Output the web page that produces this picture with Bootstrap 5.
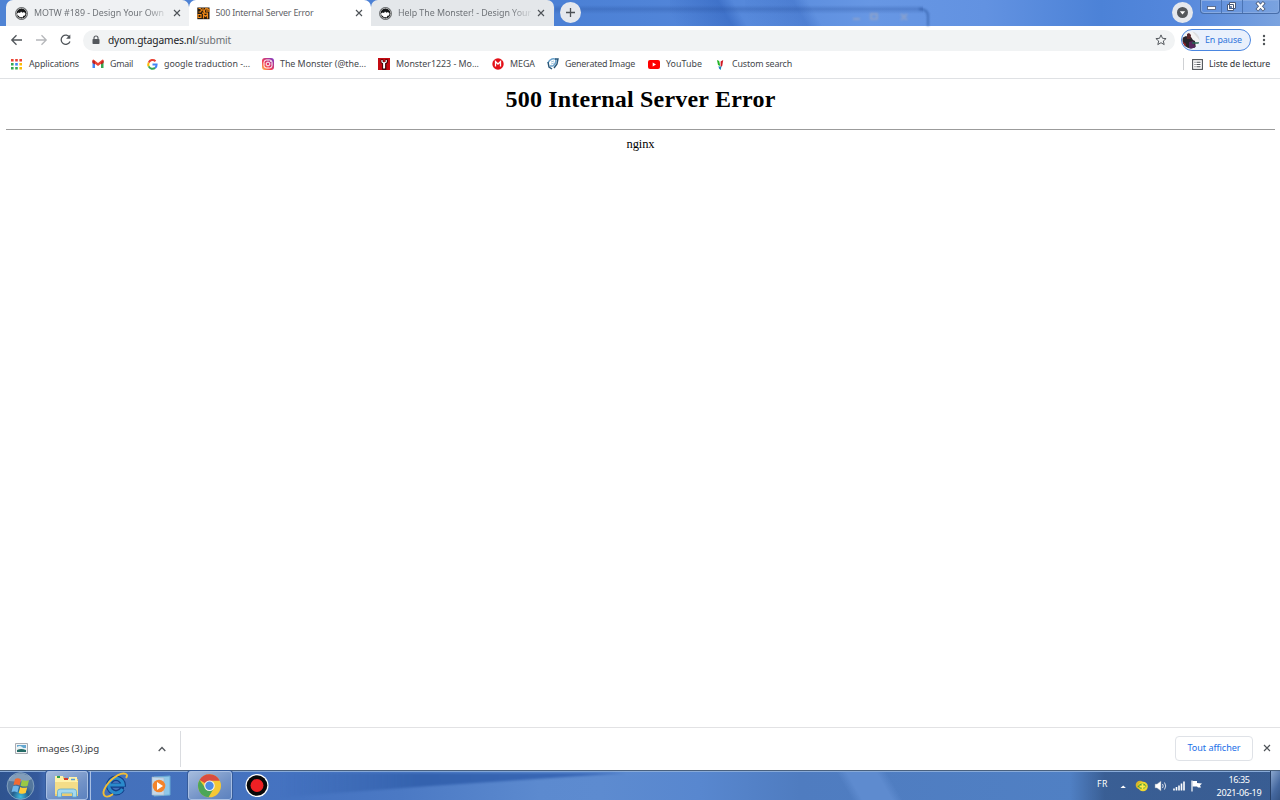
<!DOCTYPE html>
<html lang="fr">
<head>
<meta charset="utf-8">
<meta name="viewport" content="width=device-width, initial-scale=1">
<title>500 Internal Server Error</title>
<link href="https://cdn.jsdelivr.net/npm/bootstrap@5.3.0/dist/css/bootstrap.min.css" rel="stylesheet">
<style>
body{width:1280px;height:800px;overflow:hidden;font-family:"Noto Sans","Open Sans",sans-serif;font-size:8.9px;line-height:12px;color:#3c4043;background:#fff}
svg{display:block;flex:none;overflow:visible}
.lbl{white-space:nowrap;display:block}
.strip{height:26px;background:
 linear-gradient(180deg,transparent 5px,rgba(35,75,150,.28) 9px,transparent 14px) 555px 0/368px 26px no-repeat,
 linear-gradient(60deg,transparent 5%,rgba(25,75,170,.34) 50%,transparent 62%) 670px 0/110px 26px no-repeat,
 linear-gradient(60deg,transparent 5%,rgba(25,75,170,.24) 50%,transparent 62%) 745px 0/110px 26px no-repeat,
 linear-gradient(90deg,#4f83d4,#4b80d5 44%,#5487da 57%,#6797e4 68%,#6292e1 77%,#4c82d7 86%,#5487dc 92%,#7ba3df)}
.tab{width:182.5px;height:26px;border-radius:7px 7px 0 0;background:#eff1f3;color:#6f7378;padding-left:9px;position:relative}
.tab.active{background:#fff;color:#5f6368;padding-left:8px}
.tab.third{background:#e4e7ea;padding-left:8px}
.tab .lbl{width:133px;margin-left:6px;overflow:hidden}
.fade-end{-webkit-mask-image:linear-gradient(90deg,#000 112px,transparent 136px);mask-image:linear-gradient(90deg,#000 112px,transparent 136px)}
.tab .cls{margin-left:6px}
.round{width:21px;height:21px;border-radius:50%;background:#e5e8ed}
.caption-box{width:80px;height:14px;border:1px solid #476da9;border-top:0;border-radius:0 0 4px 4px;box-shadow:inset 0 0 0 1px #86aae2}
.caption-box>div{border-right:1px solid #4b74b4}
.caption-box>div:last-child{border:0}
.toolbar{height:26px;padding-top:2px}
.omni{width:1092px;height:21px;border-radius:11px;background:#f1f3f4;font-size:10.2px;color:#202124;padding:0 8px 0 9px;margin-left:1px}
.omni i{font-style:normal;color:#6b6f73}
.profile{width:70px;height:22px;border:1px solid #4a86e0;border-radius:11px;background:#e9f0fc;color:#2f74db}
.avatar{width:18px;height:18px}
.bookmarks{height:27px;border-bottom:1px solid #dfe1e4;color:#45484c}
.bm{display:flex;align-items:center;height:24px}
.bm .ico{width:12px;margin-right:6px;display:flex;justify-content:center;flex:none}
.page{height:648px;font-family:"Liberation Serif",serif;color:#000;padding:5px 5px 0 6px}
.page h1{font-size:24px;line-height:30px;font-weight:700;margin:0 0 15px}
.page hr{margin:0;border:0;border-top:1px solid #9b9b9b;opacity:1}
.page p{font-size:12.5px;line-height:16px;margin:6px 0 0}
.downloads{height:43px;border-top:1px solid #e2e2e4}
.dl{width:181px;height:36px;border-right:1px solid #dadce0;padding-left:15px;font-size:9.7px;margin-bottom:1px}
.showall{width:78px;height:25px;border:1px solid #dfe2e7;border-radius:4px;color:#1a6fe8;font-size:9.1px;margin-bottom:2px}
.taskbar{height:30px;border-top:1px solid #49617f;box-shadow:inset 0 1px #88aad8;position:relative;background:
 linear-gradient(90deg,transparent 1070px,rgba(48,80,128,.7) 1105px),
 linear-gradient(60deg,transparent 36%,#5e8bcf 43% 63%,transparent 70%) 800px 0/130px 30px no-repeat,
 linear-gradient(90deg,#2e538f,#34599b 38px,#4470b9 48px,#4573c1 300px,#4b79c4 400px,#5c8acf 540px,#5d8bd0 600px,#5887cf 700px,#4f7cc0 800px,#5080c4 1080px,#4d7bbf)}
.shade{position:absolute;left:280px;top:2px}
.task{width:45px;height:29px;border-radius:3px}
.task.open{border:1px solid #a8bfe3;box-shadow:0 0 0 1px #355b9a;background:linear-gradient(150deg,#a5bbdd,#7393c7 60%,#5c82bf)}
.clock{color:#fff;width:46px;font-size:9.1px;line-height:13px}
.peek{width:10px;height:29px;border-left:1px solid #263f67;background:linear-gradient(120deg,#8ba7cf,#45689f 60%,#345485)}
</style>
</head>
<body class="d-flex flex-column">
<svg width="0" height="0" style="position:absolute" aria-hidden="true"><defs>
<g id="x"><path d="M1 1l6 6M7 1l-6 6" stroke="#4e5358" stroke-width="1.15"/></g>
<g id="badge"><circle cx="6.500" cy="6.500" r="6.400" fill="#55585a"/><circle cx="6.500" cy="6.500" r="5.300" fill="#161819" stroke="#d0d0d0" stroke-width=".8"/><path d="M2 6.500l1.700-1L5 6l1-1.500 1.500 1.200 1.500-.7 1.500 1.500-.5 2-1.500.3-1 1.700-1.500-.6-1.300.5-.7-1.500L2.500 8.500z" fill="#fff"/></g>
</defs></svg>

<header>
<div class="strip d-flex align-items-start">
  <div class="tab d-flex align-items-center" style="margin-left:6px"><svg width="13" height="13"><use href="#badge"/></svg><span class="lbl fade-end" id="t1">MOTW #189 - Design Your Own</span><svg class="cls" width="8" height="8"><use href="#x"/></svg></div>
  <div class="tab active d-flex align-items-center">
    <svg width="13" height="13"><rect x=".3" y=".5" width="12.200" height="11.700" fill="#24190d"/><path d="M1.500 1.500h2l1 1.500-1 2h-2M6 1v2.500L7.500 5V3.500L9 1M10 5V1.500l2 1V5M1 7.500h3v3H1zM6.500 11.500v-4l2 2 2-2v4M5 6.200h6" fill="none" stroke="#f38a17" stroke-width="1.200"/></svg>
    <span class="lbl" id="t2">500 Internal Server Error</span><svg class="cls" width="8" height="8"><use href="#x"/></svg></div>
  <div class="tab third d-flex align-items-center"><svg width="13" height="13"><use href="#badge"/></svg><span class="lbl fade-end" id="t3">Help The Monster! - Design Your</span><svg class="cls" width="8" height="8"><use href="#x"/></svg></div>
  <div class="round d-flex align-items-center justify-content-center" style="margin:2px 0 0 6px"><svg width="9" height="9"><path d="M4.500 0v9M0 4.500h9" stroke="#4d5156" stroke-width="1.300"/></svg></div>
  <svg width="110" height="26" style="margin-left:270px;filter:blur(1px)" fill="none" stroke="#a3a9bd" stroke-width="2" opacity=".6"><path d="M2 19h7M20 14h6v5h-6zM50 14l6 6M56 14l-6 6"/><path d="M68 9q9 0 9 7v10" stroke="#29549c"/></svg>
  <div class="round d-flex align-items-center justify-content-center" style="margin:2px 7px 0 auto"><svg width="11" height="11"><circle cx="5.500" cy="5.500" r="5.500" fill="#53575b"/><path d="M2.800 4.200h5.400L5.500 7.600z" fill="#fff"/></svg></div>
  <div class="caption-box d-flex">
    <div style="width:21px"><svg width="20" height="13"><rect x="6.500" y="6.500" width="8" height="3" fill="#fff" stroke="#4c5b78" stroke-width=".8"/></svg></div>
    <div style="width:21px"><svg width="20" height="13"><path d="M7.500 2.500h6v6h-6zM5.500 4.500h6v6h-6z" fill="#fff" stroke="#485979"/><rect x="7.300" y="6.500" width="2.200" height="2" fill="#547fc5" stroke="#485979" stroke-width=".6"/></svg></div>
    <div style="width:35px"><svg width="35" height="13"><path d="M15 3.500l5 5.500M20 3.500L15 9" stroke="#495a78" stroke-width="3.600" stroke-linecap="square"/><path d="M15 3.500l5 5.500M20 3.500L15 9" stroke="#fff" stroke-width="2" stroke-linecap="square"/></svg></div>
  </div>
</div>

<div class="toolbar d-flex align-items-center">
  <svg width="82" height="24" fill="none" stroke="#50555a" stroke-width="1.300"><path d="M22 12H12M16.500 7.300L11.800 12l4.700 4.700"/><path d="M36 12h10M41.500 7.300l4.700 4.700-4.700 4.700" stroke="#b5b7ba"/><path d="M69.800 9.500A4.600 4.600 0 1 0 70 13.500"/><path d="M70.300 6.500v4.200h-4.200z" fill="#50555a" stroke="none"/></svg>
  <div class="omni d-flex align-items-center">
    <svg width="8" height="10"><rect x=".5" y="4" width="7" height="5" rx=".8" fill="#54585d"/><path d="M2 4.500V3a2 2 0 0 1 4 0v1.500" fill="none" stroke="#54585d" stroke-width="1.100"/></svg>
    <span class="lbl" id="url" style="margin-left:8px">dyom.gtagames.nl<i>/submit</i></span>
    <svg class="ms-auto" width="12" height="12"><path d="M6 .9l1.500 3.400 3.600.3-2.800 2.400.9 3.600L6 8.700l-3.200 1.900.9-3.600L.9 4.600l3.600-.3z" fill="none" stroke="#54585d"/></svg>
  </div>
  <div class="profile d-flex align-items-center" style="margin-left:6px">
    <svg class="avatar"><defs><clipPath id="av"><circle cx="9" cy="9" r="8.500"/></clipPath></defs><g clip-path="url(#av)"><path d="M0 0h18v18H0z" fill="#f3f3f4"/><path d="M10 0h8v10z" fill="#dcdde0"/><path d="M0 7l4-2 2 1 3 0 2 3 2 1 1 8H0z" fill="#28242b"/><path d="M5 3l2-1 2 2-.5 4L5 8z" fill="#5b292e"/><path d="M7 11l4-1 3 8H7z" fill="#56265f"/><path d="M0 10l4 3-1 5H0z" fill="#8c1f26"/><path d="M10 12h7" stroke="#246453" stroke-width="1.300"/></g></svg>
    <span class="lbl" id="pause" style="margin-left:5px">En pause</span>
  </div>
  <svg width="4" height="12" style="margin-left:11px" fill="#4f5458"><circle cx="2" cy="2" r="1.200"/><circle cx="2" cy="6" r="1.200"/><circle cx="2" cy="10" r="1.200"/></svg>
</div>

<nav class="bookmarks d-flex" aria-label="Favoris">
  <div class="bm" style="width:81px;margin-left:11px"><span class="ico"><svg width="12" height="12"><path d="M0 1h2.600v2.600H0zM4.200 1h2.600v2.600H4.200zM8.400 1H11v2.600H8.400z" fill="#ea4335"/><path d="M0 5h2.600v2.600H0zM0 9h2.600v2.600H0zM4.200 9h2.600v2.600H4.200z" fill="#34a853"/><path d="M4.200 5h2.600v2.600H4.200z" fill="#4285f4"/><path d="M8.400 5H11v2.600H8.400zM8.400 9H11v2.600H8.400z" fill="#fbbc05"/></svg></span><span class="lbl" id="b1">Applications</span></div>
  <div class="bm" style="width:54px"><span class="ico"><svg width="12" height="10"><path d="M.5 2v7H3V4z" fill="#4285f4"/><path d="M9 4v5h2.500V2z" fill="#34a853"/><path d="M.5 1l1-.5L6 4 10.500.5l1 .5v2L6 7 .5 3z" fill="#ea4335"/><path d="M.5 1.500V4L3 5.500V2zM9 3v2.500L11.500 4V1.500z" fill="#c5221f"/></svg></span><span class="lbl" id="b2">Gmail</span></div>
  <div class="bm" style="width:116px"><span class="ico"><svg width="11" height="11" fill="none" stroke-width="2"><path d="M8.500 2.200A4.200 4.200 0 0 0 1.700 3.600" stroke="#ea4335"/><path d="M1.700 3.600a4.300 4.300 0 0 0 0 3.800" stroke="#fbbc05"/><path d="M1.700 7.400a4.200 4.200 0 0 0 6.400 1.500" stroke="#34a853"/><path d="M8.100 8.900a4.200 4.200 0 0 0 1.500-3.400H5.500" stroke="#4285f4"/></svg></span><span class="lbl" id="b3">google traduction -...</span></div>
  <div class="bm" style="width:116px"><span class="ico"><svg width="12" height="12"><defs><linearGradient id="ig" x1="0" y1="1" x2="1" y2="0"><stop stop-color="#ffc34b"/><stop offset=".4" stop-color="#f23c55"/><stop offset="1" stop-color="#7938cb"/></linearGradient></defs><rect width="12" height="12" rx="3" fill="url(#ig)"/><rect x="2" y="2" width="8" height="8" rx="2.300" fill="none" stroke="#fff"/><circle cx="6" cy="6" r="1.900" fill="none" stroke="#fff"/><circle cx="8.400" cy="3.600" r=".5" fill="#fff"/></svg></span><span class="lbl" id="b4">The Monster (@the...</span></div>
  <div class="bm" style="width:114px"><span class="ico"><svg width="12" height="12"><path d="M0 0h12v12H0z" fill="#c40b12"/><path d="M4 1.500V4l1.500 1.500v5h1.500v-5L8.500 4V1.500" fill="none" stroke="#300" stroke-width="2.600"/><path d="M4 2v2l1.500 1h1L8.200 4V2" fill="none" stroke="#fff" stroke-width="1.200"/><path d="M6.100 4.500v6" stroke="#fff" stroke-width="2"/></svg></span><span class="lbl" id="b5">Monster1223 - Mo...</span></div>
  <div class="bm" style="width:55px"><span class="ico"><svg width="12" height="12"><circle cx="6" cy="6" r="5.700" fill="#e31018"/><path d="M3.500 8.500v-5L6 6l2.500-2.500v5" fill="none" stroke="#fff" stroke-width="1.300"/></svg></span><span class="lbl" id="b6">MEGA</span></div>
  <div class="bm" style="width:101px"><span class="ico"><svg width="12" height="12" fill="none"><path d="M1 5q1-3 4-4t4 1q0 4-3 6H3" stroke="#6ba3cc" stroke-width="1.500"/><path d="M1 4l1 5 3 2M8 1h3l-1 5-3 4" stroke="#285678" stroke-width="1.400"/><path d="M4 4l3-1M4 6l3-1" stroke="#a2c7df"/></svg></span><span class="lbl" id="b7">Generated Image</span></div>
  <div class="bm" style="width:66px"><span class="ico"><svg width="12" height="9"><rect width="12" height="9" rx="2" fill="#f00"/><path d="M4.700 2.500v4L8 4.500z" fill="#fff"/></svg></span><span class="lbl" id="b8">YouTube</span></div>
  <div class="bm"><span class="ico"><svg width="8" height="11"><path d="M1 1l2.200 1 1 5-2.200-1z" fill="#23b526"/><path d="M4.600 2.500L7.200 1l-1 6-1.600 1z" fill="#d01825"/><path d="M2.500 7l1.500.7L5.500 7l-.8 4L3 9.500z" fill="#1781b8"/></svg></span><span class="lbl" id="b9">Custom search</span></div>
  <div class="bm ms-auto" style="margin-right:10px"><span style="height:12px;border-left:1px solid #cfd1d4;margin-right:8px"></span><svg width="11" height="11"><rect x=".6" y=".6" width="9.800" height="9.800" fill="none" stroke="#4f5358" stroke-width="1.100"/><path d="M2.500 3.200h1M4.500 3.200h4M2.500 5.500h1M4.500 5.500h4M2.500 7.800h1M4.500 7.800h4" stroke="#4f5358" stroke-width="1.100"/></svg><span class="lbl" id="b10" style="margin-left:6px;color:#303236">Liste de lecture</span></div>
</nav>
</header>

<main class="page text-center">
  <h1><span id="h">500 Internal Server Error</span></h1>
  <hr>
  <p><span id="ng">nginx</span></p>
</main>

<section class="downloads d-flex align-items-center">
  <div class="dl d-flex align-items-center"><svg width="13" height="11"><path d="M.5.500h12v10H.5z" fill="#f4f4f4" stroke="#a8abb1"/><path d="M2 2h9v3H2z" fill="#64a7d0"/><path d="M2 4q3-2 5 0t4 1v1H2z" fill="#e9f3f6"/><path d="M2 7q4-2 9 0v2H2z" fill="#246b66"/></svg><span class="lbl" id="dl" style="margin-left:9px">images (3).jpg</span><svg class="ms-auto" width="8" height="6" style="margin-right:14px"><path d="M.7 5L4 1.500 7.300 5" fill="none" stroke="#54585d" stroke-width="1.300"/></svg></div>
  <div class="showall d-flex align-items-center justify-content-center ms-auto"><span class="lbl" id="sa">Tout afficher</span></div>
  <svg width="8" height="8" style="margin:0 9px 2px 10px"><use href="#x"/></svg>
</section>

<footer class="taskbar d-flex">
  <svg class="shade" width="350" height="27" aria-hidden="true"><defs><linearGradient id="sh"><stop stop-color="#3462ae" stop-opacity="0"/><stop offset=".4" stop-color="#3462ae"/><stop offset="1" stop-color="#3b69b8"/></linearGradient></defs><path d="M0 0h345L150 13 0 24z" fill="url(#sh)" style="filter:blur(.8px)"/></svg>
  <svg width="45" height="29"><defs><radialGradient id="orb" cx=".5" cy=".9"><stop stop-color="#3ebce0"/><stop offset=".6" stop-color="#245e8e"/><stop offset="1" stop-color="#54779d"/></radialGradient></defs><circle cx="20.500" cy="15" r="13.400" fill="url(#orb)" stroke="#8facc8" stroke-width=".8"/><path d="M9 7q11-9 23 0-2 5-23 3z" fill="#b8cbdd" opacity=".45"/><path d="M15 8q3-1.500 6 .4l-1.500 6q-3-1.700-6-.3z" fill="#f16a32"/><path d="M22 9q3 1.500 7 .2l-1.500 5.800q-3 1.300-7-.3z" fill="#9ac944"/><path d="M13 15.200q3-1.300 6 .4l-1.500 6q-3-1.800-6-.5z" fill="#6fb6ea"/><path d="M20.200 16q3 1.500 7 .4l-1.500 5.700q-3 1.400-7-.2z" fill="#ffcb39"/></svg>
  <div class="task open" style="width:42px;margin-left:1px"><svg width="40" height="28"><path d="M8 5h9l2 2h12v17H8z" fill="#ebcc70"/><path d="M8 4h8v3h6V5h8v4h1v4H8z" fill="#fff2aa"/><path d="M8 10h23v12H8z" fill="#f4dd88"/><path d="M10 5h3" stroke="#30a04b" stroke-width="2"/><path d="M17 7h4" stroke="#d13b2b" stroke-width="2"/><path d="M24 7.500h4" stroke="#579ed3" stroke-width="1.500"/><path d="M10.500 25v-5.500q0-2.500 3-2.500h13q3 0 3 2.500V25h-4v-4h-11v4z" fill="#a4d8ee" stroke="#5baacf" stroke-width=".8"/></svg></div>
  <div style="width:3px;height:29px;border-right:1px solid #a8bfe3"></div>
  <div class="task d-flex justify-content-center" style="margin-left:1px;width:46px"><svg width="28" height="28"><circle cx="15" cy="14.500" r="7.200" fill="none" stroke="#133f88" stroke-width="5.600"/><path d="M10 14.500h14" stroke="#133f88" stroke-width="4.500"/><path d="M23 19h4v-3h-4z" fill="#4470b9"/><path d="M21.500 18A7.300 7.300 0 1 1 22.300 14H9" fill="none" stroke="#2b8acb" stroke-width="3"/><path d="M4 25C-3 20 16-1 25 3q2 1 0 4M4 25q3 2 8-2" fill="none" stroke="#f2bd35" stroke-width="1.900"/></svg></div>
  <div class="task d-flex justify-content-center"><svg width="24" height="28"><path d="M5 6l16-1v19l-16 1z" fill="#8fc8e9" stroke="#69a9d4"/><path d="M3 6l12 1v17L3 24z" fill="#c3d8e9" stroke="#a7b6c7" stroke-width=".6"/><circle cx="10" cy="15" r="6.300" fill="#f3842b"/><path d="M8 11v8l6-4z" fill="#fff"/></svg></div>
  <div class="task open" style="margin-left:5px;width:44px"><svg width="42" height="28"><circle cx="20.500" cy="13.800" r="11.500" fill="#f5c835"/><path d="M20.500 13.800L10.500 8.100A11.500 11.500 0 0 1 30.800 8.800H20.500z" fill="#d94c40"/><path d="M10.500 8.100A11.500 11.500 0 0 0 19.500 25.300l5-8.500-4-3-4 2.500z" fill="#4ca658"/><circle cx="20.500" cy="13.800" r="5.300" fill="#f1f2ee"/><circle cx="20.500" cy="13.800" r="4.200" fill="#4d8be5"/></svg></div>
  <svg width="48" height="29"><circle cx="25" cy="14.500" r="11.500" fill="#fff"/><circle cx="25" cy="14.500" r="10.300" fill="#080808"/><circle cx="25" cy="14.500" r="6.500" fill="#ed2024"/></svg>
  <div class="ms-auto d-flex align-items-center text-white">
    <span class="lbl" id="fr" style="margin:0 11px 3px 0;font-size:8.700px">FR</span>
    <svg width="80" height="29" viewBox="1 0 80 29" style="margin:0 17px 0 0"><path d="M2.500 17l2.700-2.500L7.900 17z" fill="#fff"/><circle cx="22" cy="14" r="4.300" fill="#d9b62a"/><circle cx="25" cy="15.500" r="4.800" fill="#f1d830"/><path d="M19.500 15.500q5-6 9-.5-3 6-9 .5z" fill="#4f9f36"/><path d="M24.500 12.500v6M21.500 15.500h6" stroke="#ffec47" stroke-width="1.800"/><path d="M37 13h2l4-3v10l-4-3h-2z" fill="#fff" stroke="#8290a6" stroke-width=".5"/><path d="M44.500 13q1.500 2 0 4M46.500 11.500q2.500 3.500 0 7" stroke="#fff" fill="none" stroke-width=".8"/><path d="M56 19.500v-2M58.500 19.500v-3.500M61 19.500v-5M63.500 19.500v-7M66 19.500v-9" stroke="#fff" stroke-width="1.600"/><path d="M74 9.500v11" stroke="#fff" stroke-width="1.200"/><path d="M74.500 10h4.500v2l5 .5-2 2 1 2H80l-1-1h-4.500z" fill="#fff"/></svg>
    <div class="clock text-center"><span class="lbl"><span id="c1">16:35</span></span><span class="lbl"><span id="c2">2021-06-19</span></span></div>
    <div class="peek" style="margin-left:8px"></div>
  </div>
</footer>
<script>
const widths={t1:130,t2:98,t3:133,url:123,pause:37,b1:50,b2:23,b3:86,b4:86,b5:83,b6:25,b7:70,b8:36,b9:60,b10:61,h:270,ng:28,dl:62,sa:53,fr:11,c1:21,c2:45};
for(const id in widths){
  const el=document.getElementById(id),r=document.createRange();
  r.selectNodeContents(el);
  el.style.letterSpacing=((widths[id]-r.getBoundingClientRect().width)/el.textContent.length).toFixed(3)+'px';
}
</script>
<script src="https://cdn.jsdelivr.net/npm/bootstrap@5.3.0/dist/js/bootstrap.bundle.min.js"></script>
</body>
</html>
